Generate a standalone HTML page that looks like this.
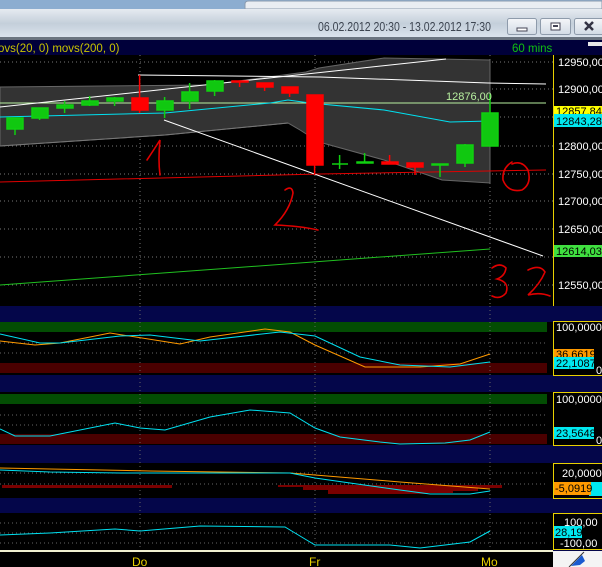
<!DOCTYPE html><html><head><style>
body{margin:0;width:602px;height:567px;overflow:hidden;background:#000;font-family:"Liberation Sans",sans-serif}
svg{display:block}
</style></head><body>
<svg width="602" height="567" viewBox="0 0 602 567" font-family="Liberation Sans, sans-serif">
<defs><linearGradient id="tb" x1="0" y1="0" x2="0" y2="1"><stop offset="0" stop-color="#e6ebf1"/><stop offset="0.5" stop-color="#c4cfda"/><stop offset="1" stop-color="#dbe4ee"/></linearGradient>
<linearGradient id="bt" x1="0" y1="0" x2="0" y2="1"><stop offset="0" stop-color="#f4f6f9"/><stop offset="1" stop-color="#d2dbe5"/></linearGradient></defs>
<rect x="0" y="0" width="602" height="9" fill="#8cadd0"/>
<path d="M245 9 V4 Q245 1 249 1 H602 V9Z" fill="#e9edf2" stroke="#8a9aae"/>
<rect x="0" y="9" width="602" height="29" fill="url(#tb)"/>
<rect x="0" y="37" width="602" height="3" fill="#6a7480"/>
<text x="318" y="31" font-size="12.5" fill="#3c4450" textLength="173" lengthAdjust="spacingAndGlyphs">06.02.2012 20:30 - 13.02.2012 17:30</text>
<g stroke="#8e9bab" fill="url(#bt)"><rect x="507.5" y="18.5" width="29" height="16" rx="2"/><rect x="540.5" y="18.5" width="30" height="16" rx="2"/><rect x="574.5" y="18.5" width="30" height="16" rx="2"/></g>
<rect x="517" y="28" width="10" height="3" fill="#fff" stroke="#445"/>
<rect x="551" y="23" width="9" height="7" fill="#fff" stroke="#445"/><rect x="553" y="25" width="5" height="2" fill="#445"/>
<path d="M585 22 L593 30 M593 22 L585 30" stroke="#334" stroke-width="2.5"/>
<rect x="0" y="40" width="602" height="15" fill="#00003a"/>
<text x="-2" y="52" font-size="11.5" fill="#c8c400">ovs(20, 0) movs(200, 0)</text>
<text x="512" y="52" font-size="11.5" fill="#10c010">60 mins</text>
<rect x="588" y="42" width="14" height="4" fill="#e8e8e8"/>
<rect x="0" y="55" width="553" height="251" fill="#000"/>
<g stroke="#777" stroke-dasharray="1,3" stroke-width="1">
<path d="M0 62H553M0 89H553M0 117H553M0 146H553M0 174H553M0 201H553M0 229H553M0 257H553M0 285H553"/>
<path d="M140 55V306M315 55V306M490 55V306"/></g>
<polygon points="0,87 208,85 306,72 319,68 384,58 490,60 490,183 442,180 384,160 319,142 300,130 288,123 165,135 0,146" fill="#333" stroke="#666"/>
<g fill="none" stroke-width="1">
<polyline points="0,146 165,135 288,123" stroke="#777"/>
<line x1="0" y1="103" x2="546" y2="103" stroke="#b8f0a0"/>
<polyline points="0,182 320,174 546,170" stroke="#e00000"/>
<polyline points="0,285 490,249" stroke="#20c020"/>
<polyline points="0,107 446,59" stroke="#fff"/>
<polyline points="138,75 320,77 488,83 546,84" stroke="#fff"/>
<line x1="164" y1="120" x2="543" y2="256" stroke="#fff"/>
<polyline points="0,117 165,113 270,103 288,100 310,103 384,110 450,122 490,121" stroke="#00e0f0"/>
</g>
<g stroke-width="1.5">
<g stroke="#10d010" fill="#10c810">
<line x1="15" y1="118" x2="15" y2="135"/><rect x="7" y="118" width="16" height="11"/>
<line x1="39.6" y1="108" x2="39.6" y2="120"/><rect x="32" y="108" width="16" height="10"/>
<line x1="64.6" y1="101" x2="64.6" y2="113"/><rect x="57" y="105" width="16" height="3"/>
<line x1="89.6" y1="96" x2="89.6" y2="106"/><rect x="82" y="101" width="16" height="4"/>
<line x1="114.6" y1="97" x2="114.6" y2="106"/><rect x="107" y="98" width="16" height="3"/>
<line x1="164.6" y1="97" x2="164.6" y2="118"/><rect x="157" y="101" width="16" height="9"/>
<line x1="189.6" y1="83" x2="189.6" y2="109"/><rect x="182" y="92" width="16" height="9"/>
<line x1="214.6" y1="80" x2="214.6" y2="96"/><rect x="207" y="81" width="16" height="10"/>
<line x1="339.6" y1="155" x2="339.6" y2="169"/><line x1="332" y1="164" x2="348" y2="164"/>
<line x1="364.6" y1="153" x2="364.6" y2="163"/><rect x="357" y="162" width="16" height="1"/>
<line x1="440" y1="164" x2="440" y2="177"/><rect x="432" y="164" width="16" height="1"/>
<line x1="465" y1="144" x2="465" y2="167"/><rect x="457" y="145" width="16" height="18"/>
<line x1="490" y1="94" x2="490" y2="146"/><rect x="482" y="113" width="16" height="33"/>
</g>
<g stroke="#f00" fill="#f00">
<line x1="139.6" y1="75" x2="139.6" y2="113"/><rect x="132" y="98" width="16" height="12"/>
<line x1="239.6" y1="81" x2="239.6" y2="87"/><rect x="232" y="81" width="16" height="1"/>
<line x1="264.6" y1="83" x2="264.6" y2="91"/><rect x="257" y="83" width="16" height="4"/>
<line x1="289.6" y1="87" x2="289.6" y2="97"/><rect x="282" y="87" width="16" height="6"/>
<line x1="314.6" y1="95" x2="314.6" y2="175"/><rect x="307" y="95" width="16" height="70"/>
<line x1="389.6" y1="155" x2="389.6" y2="164"/><rect x="382" y="162" width="16" height="2"/>
<line x1="415" y1="163" x2="415" y2="175"/><rect x="407" y="163" width="16" height="4"/>
</g></g>
<text x="446" y="100" font-size="11" fill="#b8f0a0">12876,00</text>
<g fill="none" stroke="#e00000" stroke-width="1.6" stroke-linecap="round">
<path d="M147 160 Q155 148 160 140 Q158 160 160 175"/>
<path d="M285 190 Q292 185 293 193 Q290 210 275 225 Q300 226 318 230"/>
<path d="M512 162 Q502 168 503 180 Q508 193 522 190 Q532 184 528 170 Q522 160 512 164"/>
<path d="M492 268 Q500 262 506 268 Q505 276 497 279 Q510 282 506 293 Q500 300 492 296"/>
<path d="M528 270 Q540 264 545 272 Q540 284 528 295 Q540 292 550 296"/>
</g>
<rect x="553" y="55" width="49" height="251" fill="#000"/>
<line x1="553.5" y1="55" x2="553.5" y2="306" stroke="#e8d000"/>
<g fill="#fff" font-size="11"><text x="558" y="66">12950,00</text><text x="558" y="93">12900,00</text><text x="558" y="150">12800,00</text><text x="558" y="178">12750,00</text><text x="558" y="205">12700,00</text><text x="558" y="233">12650,00</text><text x="558" y="289">12550,00</text></g>
<rect x="554" y="106" width="48" height="9" fill="#ffff00"/><text x="556" y="115" font-size="11" fill="#000">12857,84</text>
<rect x="554" y="114" width="48" height="13" fill="#00e8f0"/><text x="556" y="125" font-size="11" fill="#000">12843,28</text>
<rect x="554" y="245" width="48" height="12" fill="#40e040"/><text x="556" y="255" font-size="11" fill="#000">12614,03</text>
<rect x="0" y="306" width="553" height="245" fill="#04064a"/>
<rect x="0" y="322" width="553" height="53" fill="#000"/>
<rect x="0" y="322" width="547" height="10" fill="#034d03"/>
<rect x="0" y="363" width="547" height="10" fill="#4a0000"/>
<rect x="0" y="392" width="553" height="53" fill="#000"/>
<rect x="0" y="394" width="547" height="10" fill="#034d03"/>
<rect x="0" y="434" width="547" height="10" fill="#4a0000"/>
<rect x="0" y="463" width="553" height="35" fill="#000"/>
<rect x="0" y="513" width="553" height="37" fill="#000"/>
<g stroke="#666" stroke-dasharray="1,3"><path d="M0 343H547M0 353H547M0 415H547M0 425H547M0 473H547M0 484H547M0 523H547M0 533H547M0 543H547M140 306V550M315 306V550M490 306V550"/></g>
<g fill="#7a0000"><rect x="2" y="485" width="170" height="3"/><rect x="278" y="485" width="25" height="2"/><rect x="303" y="485" width="25" height="5"/><rect x="328" y="485" width="25" height="9"/><rect x="353" y="485" width="25" height="9"/><rect x="378" y="485" width="25" height="9"/><rect x="403" y="485" width="25" height="9"/><rect x="428" y="485" width="25" height="8"/><rect x="453" y="485" width="25" height="6"/><rect x="478" y="485" width="24" height="3"/></g>
<g fill="none" stroke-width="1">
<polyline stroke="#ff9a00" points="0,341 35,345 60,343 110,333 180,344 210,337 265,329 290,332 315,345 365,367 420,367 460,364 490,354"/>
<polyline stroke="#00e0f0" points="0,334 40,343 60,343 120,336 150,335 200,341 280,332 315,336 360,357 400,365 450,367 490,362"/>
<polyline stroke="#00e0f0" points="0,429 15,436 50,436 115,423 140,428 165,430 210,417 250,410 290,413 315,428 340,437 380,442 400,444 445,443 470,440 490,432"/>
<polyline stroke="#ff9a00" points="0,468 50,469 150,471 290,473 315,475 400,482 490,489"/>
<polyline stroke="#00e0f0" points="0,470 50,472 120,473 290,473 315,478 350,483 400,490 430,494 470,494 490,491"/>
<polyline stroke="#00e0f0" points="0,535 50,533 115,529 140,531 200,526 285,527 295,533 315,545 390,545 420,548 470,542 490,531"/>
</g>
<rect x="553" y="306" width="49" height="245" fill="#04064a"/>
<g fill="#000" stroke="#e8d000"><rect x="553.5" y="321.5" width="50" height="54"/><rect x="553.5" y="392.5" width="50" height="53"/><rect x="553.5" y="463.5" width="50" height="35"/><rect x="553.5" y="513.5" width="50" height="36"/></g>
<g fill="#fff" font-size="11">
<text x="556" y="331">100,0000</text><text x="596" y="374">0</text>
<text x="556" y="403">100,0000</text><text x="596" y="444">0</text>
<text x="562" y="477">20,0000</text>
<text x="564" y="526">100,00</text><text x="560" y="547">-100,00</text></g>
<rect x="554" y="349" width="40" height="9" fill="#ff9a00"/><text x="556" y="358" font-size="11" fill="#000">36,6619</text>
<rect x="554" y="357" width="40" height="12" fill="#00e8f0"/><text x="556" y="367" font-size="11" fill="#000">22,1087</text>
<rect x="554" y="427" width="40" height="12" fill="#00e8f0"/><text x="556" y="437" font-size="11" fill="#000">23,5648</text>
<rect x="589" y="482" width="13" height="14" fill="#00e8f0"/>
<rect x="554" y="482" width="37" height="13" fill="#ff9a00"/><text x="555" y="492" font-size="11" fill="#000">-5,0919</text>
<rect x="554" y="526" width="28" height="12" fill="#00e8f0"/><text x="555" y="536" font-size="11" fill="#000">28,19</text>
<rect x="0" y="550" width="553" height="2" fill="#f0f0d0"/>
<rect x="0" y="552" width="553" height="15" fill="#000"/>
<g fill="#e8d000" font-size="12"><text x="132" y="566">Do</text><text x="309" y="566">Fr</text><text x="481" y="566">Mo</text></g>
<rect x="553" y="551" width="49" height="16" fill="#f4f4f4"/>
<path d="M571 566 L582 555 L585 561 L580 565Z" fill="#1a5ad0"/><line x1="569" y1="567" x2="584" y2="552" stroke="#333"/>
</svg>
</body></html>
